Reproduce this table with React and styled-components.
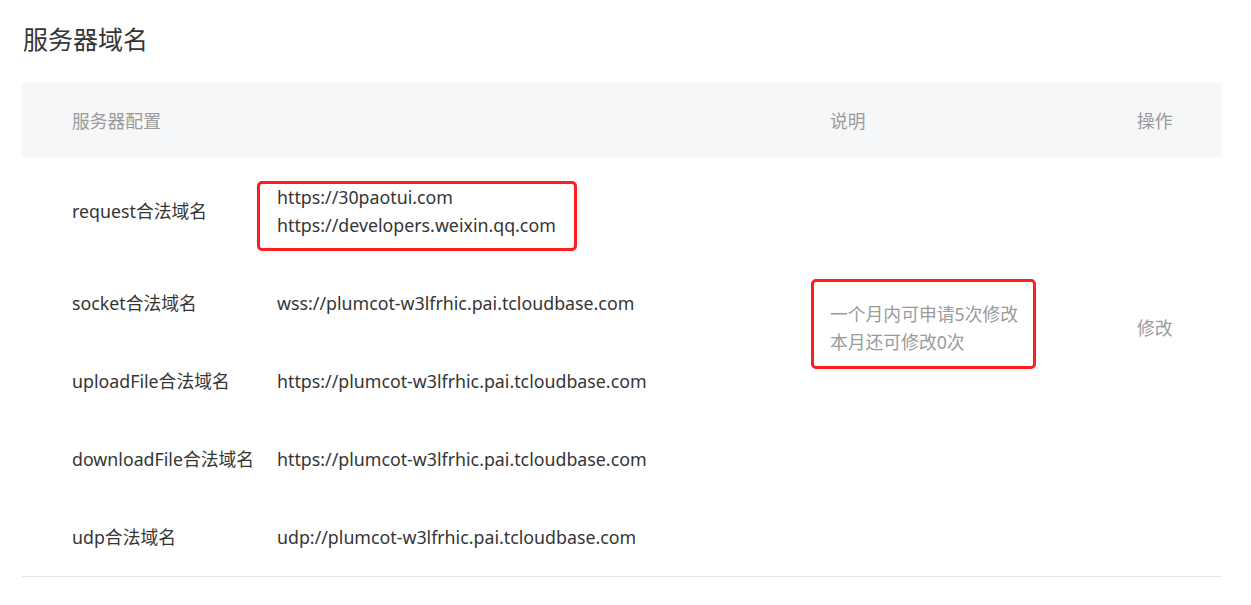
import React from "react";
import styled, { createGlobalStyle } from "styled-components";

const GlobalStyle = createGlobalStyle`
  body {
    margin: 0;
    background: #fff;
    font-family: "Noto Sans", "Noto Sans CJK SC", sans-serif;
    color: #353535;
  }
`;

const Page = styled.div`
  padding: 21px 29px 0 22px;
`;

const Title = styled.h2`
  margin: 0 0 0 1px;
  font-size: 25px;
  font-weight: normal;
  line-height: 36px;
  color: #353535;
`;

const Table = styled.div`
  margin-top: 26px;
  width: 1200px;
  border-bottom: 1px solid #e7e7e7;
`;

const Grid = styled.div`
  display: grid;
  grid-template-columns: 235px 553px 307px 105px;
  font-size: 17.8px;
  line-height: 28px;
`;

const Body = styled(Grid)`
  padding-bottom: 1px;
`;

const Head = styled(Grid)`
  background: #f6f7f9;
  color: #9a9a9a;
`;

const HeadCell = styled.div`
  padding: 24px 0 22px ${(p) => (p.$first ? "50px" : "20px")};
  grid-column: ${(p) => (p.$span ? "1 / 3" : "auto")};
`;

const Label = styled.div`
  grid-column: 1;
  grid-row: ${(p) => p.$row};
  align-self: center;
  padding: 2px 0 0 50px;
  white-space: nowrap;
`;

const Value = styled.div`
  grid-column: 2;
  grid-row: ${(p) => p.$row};
  padding: 26px 0 24px 20px;
`;

const Marked = styled.div`
  position: relative;
  display: inline-block;

  &::after {
    content: "";
    position: absolute;
    top: ${(p) => p.$top}px;
    bottom: ${(p) => p.$bottom}px;
    left: ${(p) => p.$left}px;
    right: ${(p) => p.$right}px;
    border: 3px solid #ff1d1d;
    border-radius: 5px;
    pointer-events: none;
  }
`;

const Note = styled.div`
  grid-column: 3;
  grid-row: 1 / 5;
  align-self: center;
  padding: 2px 0 0 20px;
  color: #9a9a9a;
`;

const Action = styled.div`
  grid-column: 4;
  grid-row: 1 / 5;
  align-self: center;
  padding: 2px 0 0 20px;
  color: #9a9a9a;
`;

const domains = [
  { label: "request合法域名", values: ["https://30paotui.com", "https://developers.weixin.qq.com"], marked: true },
  { label: "socket合法域名", values: ["wss://plumcot-w3lfrhic.pai.tcloudbase.com"] },
  { label: "uploadFile合法域名", values: ["https://plumcot-w3lfrhic.pai.tcloudbase.com"] },
  { label: "downloadFile合法域名", values: ["https://plumcot-w3lfrhic.pai.tcloudbase.com"] },
  { label: "udp合法域名", values: ["udp://plumcot-w3lfrhic.pai.tcloudbase.com"] },
];

export default function App() {
  return (
    <Page>
      <GlobalStyle />
      <Title>服务器域名</Title>
      <Table>
        <Head>
          <HeadCell $first $span>服务器配置</HeadCell>
          <HeadCell>说明</HeadCell>
          <HeadCell>操作</HeadCell>
        </Head>
        <Body>
          {domains.map((d, i) => (
            <React.Fragment key={d.label}>
              <Label $row={i + 1}>{d.label}</Label>
              <Value $row={i + 1}>
                {d.marked ? (
                  <Marked $top={-2} $bottom={-12} $left={-20} $right={-21}>
                    {d.values.map((v) => (
                      <div key={v}>{v}</div>
                    ))}
                  </Marked>
                ) : (
                  d.values.map((v) => <div key={v}>{v}</div>)
                )}
              </Value>
            </React.Fragment>
          ))}
          <Note>
            <Marked $top={-21} $bottom={-13} $left={-19} $right={-18}>
              <div>一个月内可申请5次修改</div>
              <div>本月还可修改0次</div>
            </Marked>
          </Note>
          <Action>修改</Action>
        </Body>
      </Table>
    </Page>
  );
}
